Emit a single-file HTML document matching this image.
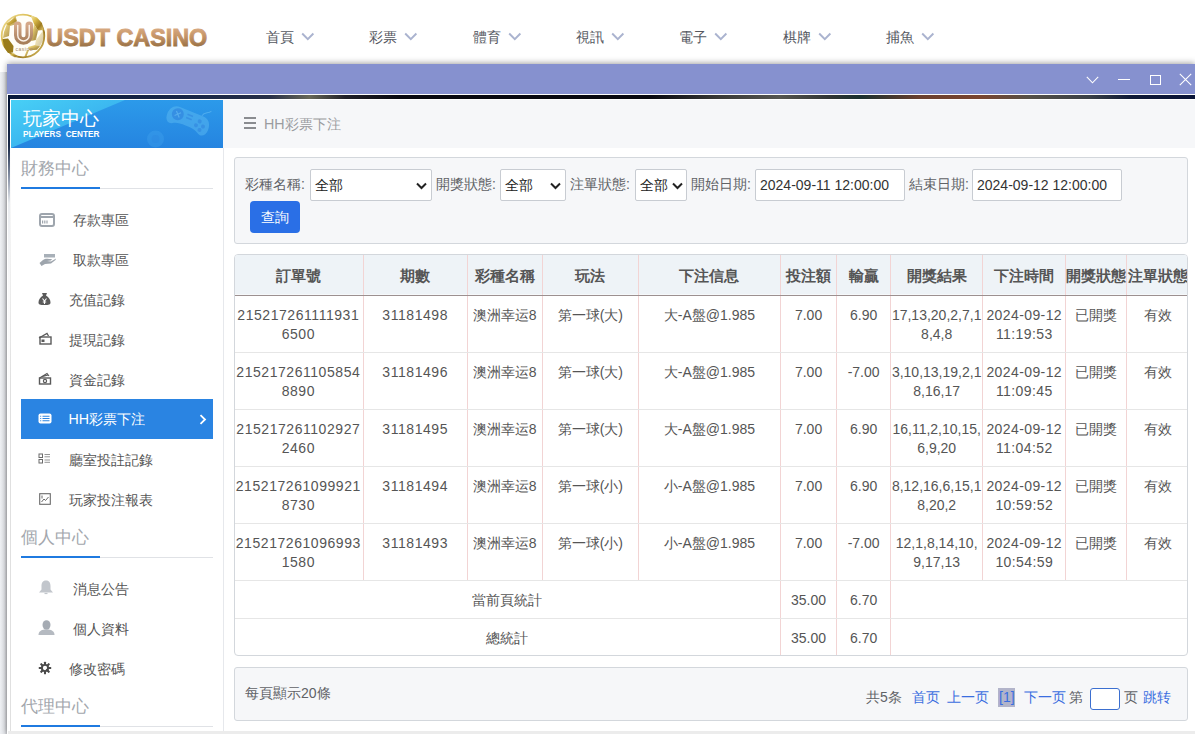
<!DOCTYPE html>
<html><head><meta charset="utf-8">
<style>
*{box-sizing:border-box;margin:0;padding:0}
html,body{width:1195px;height:734px;overflow:hidden;background:#fff;font-family:"Liberation Sans",sans-serif;color:#606266}
.abs{position:absolute}
#top{position:absolute;left:0;top:0;width:1195px;height:64px;background:#fff}
.nav{position:absolute;top:28px;font-size:14px;color:#55585f;line-height:18px;white-space:nowrap}
.nav svg{position:absolute;left:35px;top:4px}
#lshadow{position:absolute;left:0;top:72px;width:7px;height:662px;background:linear-gradient(to right,#eff1f4,#e2e4e8 60%,#c2c3c7)}
#tshadow{position:absolute;left:4px;top:58px;width:1191px;height:6px;background:linear-gradient(to bottom,rgba(0,0,0,0),rgba(0,0,0,.19))}
#bband{position:absolute;left:8px;top:731px;width:1187px;height:3px;background:#ececec}
#modal{position:absolute;left:7px;top:64px;width:1188px;height:670px;background:#fff;box-shadow:0 -1px 6px rgba(0,0,0,.36)}
#mbar{position:absolute;left:0;top:0;width:1188px;height:30px;background:#8691cf}
#mline{position:absolute;left:1px;top:31px;width:1187px;height:4px;background:linear-gradient(to right,#0a1a3c 0.0%,#1a2848 16.2%,#283048 22.1%,#686858 25.4%,#202028 28.4%,#080810 33.0%,#080810 54.1%,#3a3a38 60.0%,#555550 65.0%,#303434 69.3%,#1a3030 71.8%,#6a4030 76.8%,#7a4530 81.9%,#555048 86.1%,#3a4048 91.2%,#101a38 94.5%,#0a1438 100.0%)}
#sidebar{position:absolute;left:11px;top:100px;width:213px;height:631px;background:#fff;border-right:1px solid #e6e8ec}
#lborder{position:absolute;left:8px;top:95px;width:2px;height:636px;background:linear-gradient(to bottom,#001030 0%,#1a2a48 8%,#8a94a8 13%,rgba(220,224,230,.6) 17%,rgba(240,240,242,.4) 30%,rgba(255,255,255,0) 60%)}
#lborder2{position:absolute;left:10px;top:150px;width:1px;height:581px;background:linear-gradient(to bottom,rgba(220,222,226,0),#e0e0e0 40%)}
#shead{position:absolute;left:0;top:0;width:212px;height:48px;background:linear-gradient(to bottom,#2c9aea,#2584e0);overflow:hidden}
.sec{position:absolute;left:10px;font-size:17px;color:#a3a7ad;line-height:20px}
.secline{position:absolute;left:10px;width:192px;height:1px;background:#e0e2e6}
.secline b{position:absolute;left:0;top:-1px;width:79px;height:2px;background:#1f7ae0}
.item{position:absolute;font-size:14px;color:#555;line-height:18px;white-space:nowrap}
#content{position:absolute;left:224px;top:100px;width:971px;height:631px;background:#fff}
#crumb{position:absolute;left:-1px;top:0;width:972px;height:48px;background:#f6f7f9}
.panel{position:absolute;background:#f6f7f9;border:1px solid #d3d7dc;border-radius:3px}
.lbl{position:absolute;font-size:14px;color:#606266;line-height:18px;white-space:nowrap}
.sel{position:absolute;height:32px;background:#fff;border:1px solid #c8ccd2;border-radius:2px;font-size:14px;color:#222;line-height:30px;padding-left:4px}
table{border-collapse:collapse;font-size:14px;color:#555}
#tbl{position:absolute;left:-1px;top:-1px;table-layout:fixed;width:955px}
#tbl th{height:41px;background:#eef3f7;font-size:15px;font-weight:bold;color:#555;text-align:center;padding:4px 0 0 0;border-left:1px solid #f2d4d4;border-bottom:1px solid #9c9090;box-shadow:inset 0 -1px 0 #f6f9fb;white-space:nowrap;overflow:visible}
#tbl td{height:57px;text-align:center;vertical-align:top;padding:10px 0 0 0;line-height:19px;border-left:1px solid #f2d4d4;border-bottom:1px solid #e6e6e6;font-size:14px;color:#555}
#tbl tr.sum td{height:38px;vertical-align:middle;padding:2px 0 0 0}
#tbl th:first-child,#tbl td:first-child{border-left:none}
#tbl td.ls{letter-spacing:.55px}
#tbl td.ls4{letter-spacing:.4px}
</style></head><body>
<div id="top">
  <svg class="abs" style="left:0;top:10px" width="210" height="52" viewBox="0 0 210 52">
    <defs>
      <linearGradient id="gold" x1="0" y1="0" x2="1" y2="1"><stop offset="0" stop-color="#f4e6a8"/><stop offset=".35" stop-color="#d8b848"/><stop offset=".7" stop-color="#9c7a20"/><stop offset="1" stop-color="#e6cc70"/></linearGradient>
      <linearGradient id="ubrown" x1="0" y1="0" x2="0" y2="1"><stop offset="0" stop-color="#d4a888"/><stop offset="1" stop-color="#a8805c"/></linearGradient>
      <linearGradient id="tbrown" gradientUnits="userSpaceOnUse" x1="0" y1="18" x2="0" y2="36"><stop offset="0" stop-color="#d8aa82"/><stop offset=".5" stop-color="#c39264"/><stop offset="1" stop-color="#9c7448"/></linearGradient>
    </defs>
    <circle cx="23" cy="26" r="21.3" fill="#fffef8" stroke="url(#gold)" stroke-width="1.8"/>
    <g fill="url(#gold)">
      <path d="M31 5.5 L37 7.5 L42 13 L43.5 20 L38 20.5 L34 14 L32 9 Z"/>
      <path d="M2.5 29 L8 28.5 L13.5 36 L13 42.5 L8 43 L4 37 Z" fill="#9a7c1c"/>
      <path d="M6 14 L15 8 L16.5 11 L9 15.5 Z"/>
      <path d="M15.5 6 L17 11 L15 14.5 L10 16 L9 26 L3 28 L4 22 L7 14 Z" opacity=".75"/>
      <path d="M34 14 L38 20.5 L36 30 L31 31 Z" opacity=".8"/>
      <path d="M36 30 L43.5 20 L44 30 L40 36 L35 35 Z" opacity=".35"/>
      <path d="M13 42.5 L18 46.5 L15 47.5 L10 45 Z" opacity=".7"/>
      <path d="M28 37 L35 35 L40 36 L37 40 L29 40 Z" opacity=".8"/>
      <path d="M27 40 L29 40 L26 47.5 L24 47.5 Z" opacity=".8"/>
    </g>
    <path d="M17.75 15.35 V25.3 A5.75 5.75 0 0 0 29.25 25.3 V15.35" fill="none" stroke="url(#ubrown)" stroke-width="7.5" stroke-linecap="round"/>
    <path d="M17.75 15.35 V25.3 A5.75 5.75 0 0 0 29.25 25.3 V15.35" fill="none" stroke="#fbf3ea" stroke-width="1.4" stroke-linecap="round"/>
    <text x="15.5" y="40.5" font-family="Liberation Sans" font-size="5" textLength="17" fill="#a8886a">casino</text>
    <text x="46.3" y="35.8" font-family="Liberation Sans" font-weight="bold" font-size="24.5" textLength="161" lengthAdjust="spacingAndGlyphs" fill="url(#tbrown)" stroke="url(#tbrown)" stroke-width="0.9">USDT CASINO</text>
  </svg>
  <div class="nav" style="left:266px">首頁<svg width="14" height="9" viewBox="0 0 14 9"><path d="M1.2 1.5 L6.8 7.2 L12.4 1.5" fill="none" stroke="#aab3cf" stroke-width="1.9"/></svg></div>
  <div class="nav" style="left:369px">彩票<svg width="14" height="9" viewBox="0 0 14 9"><path d="M1.2 1.5 L6.8 7.2 L12.4 1.5" fill="none" stroke="#aab3cf" stroke-width="1.9"/></svg></div>
  <div class="nav" style="left:473px">體育<svg width="14" height="9" viewBox="0 0 14 9"><path d="M1.2 1.5 L6.8 7.2 L12.4 1.5" fill="none" stroke="#aab3cf" stroke-width="1.9"/></svg></div>
  <div class="nav" style="left:576px">視訊<svg width="14" height="9" viewBox="0 0 14 9"><path d="M1.2 1.5 L6.8 7.2 L12.4 1.5" fill="none" stroke="#aab3cf" stroke-width="1.9"/></svg></div>
  <div class="nav" style="left:679px">電子<svg width="14" height="9" viewBox="0 0 14 9"><path d="M1.2 1.5 L6.8 7.2 L12.4 1.5" fill="none" stroke="#aab3cf" stroke-width="1.9"/></svg></div>
  <div class="nav" style="left:783px">棋牌<svg width="14" height="9" viewBox="0 0 14 9"><path d="M1.2 1.5 L6.8 7.2 L12.4 1.5" fill="none" stroke="#aab3cf" stroke-width="1.9"/></svg></div>
  <div class="nav" style="left:886px">捕魚<svg width="14" height="9" viewBox="0 0 14 9"><path d="M1.2 1.5 L6.8 7.2 L12.4 1.5" fill="none" stroke="#aab3cf" stroke-width="1.9"/></svg></div>
</div>
<div id="lshadow"></div>
<div id="modal">
  <div id="mbar">
    <svg class="abs" style="left:1079px;top:12px" width="13" height="8" viewBox="0 0 13 8"><path d="M0.8 0.8 L6.5 6.8 L12.2 0.8" fill="none" stroke="#fff" stroke-width="1.1"/></svg>
    <div class="abs" style="left:1111px;top:15px;width:12px;height:1.3px;background:#fff"></div>
    <div class="abs" style="left:1143px;top:11px;width:11px;height:10px;border:1.6px solid #fff"></div>
    <svg class="abs" style="left:1172px;top:9px" width="13" height="13" viewBox="0 0 13 13"><path d="M0.8 0.8 L12.2 12.2 M12.2 0.8 L0.8 12.2" fill="none" stroke="#fff" stroke-width="1.1"/></svg>
  </div>
  <div id="mline"></div>
</div>
<div id="lborder"></div><div id="lborder2"></div>
<div id="sidebar">
  <div id="shead">
    <svg class="abs" style="left:0;top:0" width="212" height="48" viewBox="0 0 212 48">
      <defs><linearGradient id="hl" x1="0" y1="0" x2="1" y2="1"><stop offset="0" stop-color="#48d0f6"/><stop offset="1" stop-color="#309fea"/></linearGradient></defs>
      <polygon points="0,0 114,0 0,48" fill="url(#hl)"/>
      <g transform="translate(155 9) rotate(22 22 12)">
        <path d="M10 2 C3 2 0 7 0 13 C0 19 4 22 8 20 C11 18 14 17 22 17 C30 17 33 18 36 20 C40 22 44 19 44 13 C44 7 41 2 34 2 Z" fill="#5cbaf2" opacity=".5"/>
        <circle cx="10" cy="9.5" r="6" fill="#2a7cdc" opacity=".55"/>
        <path d="M7.5 7 L12.5 12 M12.5 7 L7.5 12" stroke="#70c4f6" stroke-width="1.2" opacity=".55"/>
        <g fill="#2a7cdc" opacity=".45"><circle cx="33" cy="8" r="2"/><circle cx="38" cy="11.5" r="2"/><circle cx="31" cy="13" r="2"/><circle cx="36" cy="16" r="2"/></g>
        <path d="M19 6 h6 M19 9.5 h6" stroke="#2a7cdc" stroke-width="1.5" opacity=".45"/>
        <path d="M33 2 C34 -3 38 -2 40 -6" fill="none" stroke="#70c4f6" stroke-width="1" opacity=".5"/>
      </g>
      <circle cx="144.5" cy="39" r="8.5" fill="#4aaef0" opacity=".28"/>
      <circle cx="144.5" cy="39" r="4" fill="#2a7cdc" opacity=".2"/>
    </svg>
    <div class="abs" style="left:11.5px;top:8px;font-size:19px;line-height:22px;color:#fff">玩家中心</div>
    <div class="abs" style="left:12px;top:30px;font-size:8.2px;font-weight:bold;line-height:9px;color:#fff;word-spacing:2.5px">PLAYERS CENTER</div>
  </div>
  <div class="sec" style="top:59px">財務中心</div>
  <div class="secline" style="top:88px"><b></b></div>
  <div class="item" style="left:62px;top:111px">存款專區</div>
  <div class="item" style="left:62px;top:151px">取款專區</div>
  <div class="item" style="left:58px;top:191px">充值記錄</div>
  <div class="item" style="left:58px;top:231px">提現記錄</div>
  <div class="item" style="left:58px;top:271px">資金記錄</div>
  <div class="abs" style="left:10px;top:299px;width:192px;height:40px;background:#2a84e2"></div>
  <div class="item" style="left:57.5px;top:310px;color:#fff;font-size:14.2px">HH彩票下注</div>
  <div class="item" style="left:58px;top:351px">廳室投註記錄</div>
  <div class="item" style="left:58px;top:391px">玩家投注報表</div>
  <svg class="abs" style="left:28px;top:113px" width="16" height="14" viewBox="0 0 16 14"><rect x="1" y="1" width="14" height="12" rx="2" fill="none" stroke="#9ea5ad" stroke-width="2"/><rect x="1" y="3" width="14" height="2" fill="#9ea5ad"/><path d="M3.6 7.6v2.8M5.8 7.6v2.8M8 7.6v2.8" stroke="#9ea5ad" stroke-width="1.2"/></svg>
  <svg class="abs" style="left:27px;top:153px" width="19" height="14" viewBox="0 0 19 14"><rect x="6" y="1" width="11" height="3.5" fill="#a8b0b8"/><path d="M1.5 10 L5 7 C7 5.5 9 5.5 11 6 L14 6 L13 7.5 L9 8 L13 8.5 L18 5.5 L17.5 7 L13 10.5 L7 11 L3.5 13 Z" fill="#9ea5ad"/></svg>
  <svg class="abs" style="left:27px;top:192px" width="13" height="14" viewBox="0 0 13 14"><path d="M4 1 L9 1 L8 3.5 C11 5 12.5 8 12.5 10.5 C12.5 12.5 11 13 6.5 13 C2 13 0.5 12.5 0.5 10.5 C0.5 8 2 5 5 3.5 Z" fill="#5a5a5a"/><path d="M4.5 6.5 L6.5 9 L8.5 6.5 M6.5 9 V12 M4.8 10 H8.2" stroke="#fff" stroke-width="1.1" fill="none"/></svg>
  <svg class="abs" style="left:27px;top:232px" width="14" height="13" viewBox="0 0 14 13"><path d="M1 6 L9 1.5 L10.5 4" fill="none" stroke="#5a5a5a" stroke-width="1.3"/><rect x="2" y="5" width="11" height="7" fill="none" stroke="#5a5a5a" stroke-width="1.4"/><rect x="3.5" y="7.5" width="3" height="2.5" fill="#5a5a5a"/></svg>
  <svg class="abs" style="left:27px;top:272px" width="14" height="13" viewBox="0 0 14 13"><path d="M1.5 6 L9 1.5 L11 4 M3 5 L10 3" fill="none" stroke="#5a5a5a" stroke-width="1.2"/><rect x="1.5" y="6" width="11" height="6" fill="none" stroke="#5a5a5a" stroke-width="1.4"/><circle cx="7" cy="9" r="1.6" fill="none" stroke="#5a5a5a" stroke-width="1.2"/></svg>
  <svg class="abs" style="left:27px;top:313px" width="14" height="11" viewBox="0 0 14 11"><rect x="0.5" y="0.5" width="13" height="10" rx="2" fill="#fff"/><path d="M4.5 3.2h7M4.5 5.5h7M4.5 7.8h7" stroke="#2a84e2" stroke-width="1.1"/><path d="M2.2 3.2h1M2.2 5.5h1M2.2 7.8h1" stroke="#2a84e2" stroke-width="1.1"/></svg>
  <svg class="abs" style="left:27px;top:353px" width="13" height="11" viewBox="0 0 13 11"><rect x="1" y="1" width="3.5" height="3.5" fill="none" stroke="#6a6a6a" stroke-width="1"/><rect x="1" y="6.5" width="3.5" height="3.5" fill="none" stroke="#6a6a6a" stroke-width="1"/><path d="M6.5 1.5h5.5M6.5 3.8h5.5M6.5 7h5.5M6.5 9.3h5.5" stroke="#8a8a8a" stroke-width="0.9"/></svg>
  <svg class="abs" style="left:28px;top:393px" width="12" height="12" viewBox="0 0 12 12"><rect x="0.7" y="0.7" width="10.6" height="10.6" fill="none" stroke="#6a6a6a" stroke-width="1.1"/><path d="M2.5 9 L5 6 L6.5 7.5 L9.5 4 M3 2.5v3" fill="none" stroke="#6a6a6a" stroke-width="1"/></svg>
  <svg class="abs" style="left:27px;top:480px" width="16" height="15" viewBox="0 0 16 15"><path d="M8 0.5 C4.5 0.5 3.5 3 3.5 6 L3.5 9.5 L1 12.5 L15 12.5 L12.5 9.5 L12.5 6 C12.5 3 11.5 0.5 8 0.5 Z" fill="#c2c6cc"/><path d="M6.5 13.5 h3" stroke="#c2c6cc" stroke-width="1.2"/></svg>
  <svg class="abs" style="left:27px;top:520px" width="17" height="15" viewBox="0 0 17 15"><ellipse cx="8.5" cy="5" rx="4" ry="4.8" fill="#a5abb3"/><path d="M0.5 15 C0.5 11.5 3 10 6.5 9.5 L10.5 9.5 C14 10 16.5 11.5 16.5 15 Z" fill="#b5bac1"/></svg>
  <svg class="abs" style="left:27px;top:561px" width="14" height="14" viewBox="0 0 14 14"><g transform="translate(7 7) scale(.93) translate(-7 -7)"><g fill="#4a4a4a"><circle cx="7" cy="7" r="4.4"/><rect x="5.9" y="0.3" width="2.2" height="13.4" rx=".6"/><rect x="5.9" y="0.3" width="2.2" height="13.4" rx=".6" transform="rotate(45 7 7)"/><rect x="5.9" y="0.3" width="2.2" height="13.4" rx=".6" transform="rotate(90 7 7)"/><rect x="5.9" y="0.3" width="2.2" height="13.4" rx=".6" transform="rotate(135 7 7)"/></g><circle cx="7" cy="7" r="2.3" fill="#fff"/><path d="M8.3 8.3 L10.3 10.3" stroke="#4a4a4a" stroke-width="1.4"/></g></svg>
  <svg class="abs" style="left:188px;top:314px" width="8" height="11" viewBox="0 0 8 11"><path d="M1.5 1.2 L6 5.5 L1.5 9.8" fill="none" stroke="#fff" stroke-width="1.8"/></svg>
  <div class="sec" style="top:428px">個人中心</div>
  <div class="secline" style="top:457px"><b></b></div>
  <div class="item" style="left:62px;top:480px">消息公告</div>
  <div class="item" style="left:62px;top:520px">個人資料</div>
  <div class="item" style="left:58px;top:560px">修改密碼</div>
  <div class="sec" style="top:597px">代理中心</div>
  <div class="secline" style="top:626px"><b></b></div>
</div>
<div id="content">
  <div id="crumb">
    <svg class="abs" style="left:21px;top:17px" width="12" height="12" viewBox="0 0 12 12"><path d="M0 1h12M0 6h12M0 11h12" stroke="#8a8c90" stroke-width="2"/></svg>
    <div class="abs" style="left:41px;top:15px;font-size:14.3px;line-height:18px;color:#9a9ca0">HH彩票下注</div>
  </div>
  <div class="panel" style="left:10px;top:57px;width:954px;height:87px">
    <div class="lbl" style="left:10px;top:17px">彩種名稱:</div>
    <div class="sel" style="left:75px;top:11px;width:122px">全部<svg class="abs" style="right:4px;top:12px" width="11" height="8" viewBox="0 0 11 8"><path d="M1 1.5 L5.5 6 L10 1.5" fill="none" stroke="#222" stroke-width="2"/></svg></div>
    <div class="lbl" style="left:201px;top:17px">開獎狀態:</div>
    <div class="sel" style="left:265px;top:11px;width:66px">全部<svg class="abs" style="right:4px;top:12px" width="11" height="8" viewBox="0 0 11 8"><path d="M1 1.5 L5.5 6 L10 1.5" fill="none" stroke="#222" stroke-width="2"/></svg></div>
    <div class="lbl" style="left:335px;top:17px">注單狀態:</div>
    <div class="sel" style="left:400px;top:11px;width:52px">全部<svg class="abs" style="right:3px;top:12px" width="11" height="8" viewBox="0 0 11 8"><path d="M1 1.5 L5.5 6 L10 1.5" fill="none" stroke="#222" stroke-width="2"/></svg></div>
    <div class="lbl" style="left:456px;top:17px">開始日期:</div>
    <div class="sel" style="left:520px;top:11px;width:150px;padding-left:4px;color:#333">2024-09-11 12:00:00</div>
    <div class="lbl" style="left:674px;top:17px">結束日期:</div>
    <div class="sel" style="left:737px;top:11px;width:150px;padding-left:4px;color:#333">2024-09-12 12:00:00</div>
    <div class="abs" style="left:15px;top:43px;width:50px;height:32px;background:#2a6fe6;border-radius:4px;color:#fff;font-size:14px;line-height:32px;text-align:center">查詢</div>
  </div>
  <div class="abs" style="left:10px;top:154px;width:954px;height:402px;border:1px solid #d3d7dc;border-radius:4px;overflow:hidden;background:#fff">
  <table id="tbl">
    <colgroup><col style="width:129px"><col style="width:104px"><col style="width:75px"><col style="width:96px"><col style="width:142px"><col style="width:56px"><col style="width:54px"><col style="width:92px"><col style="width:83px"><col style="width:61px"><col style="width:62px"></colgroup>
    <thead><tr><th>訂單號</th><th>期數</th><th>彩種名稱</th><th>玩法</th><th>下注信息</th><th>投注額</th><th>輸贏</th><th>開獎結果</th><th>下注時間</th><th>開獎狀態</th><th>注單狀態</th></tr></thead>
    <tbody>
    <tr><td class="ls">215217261111931<br>6500</td><td class="ls">31181498</td><td>澳洲幸运8</td><td>第一球(大)</td><td>大-A盤@1.985</td><td>7.00</td><td>6.90</td><td>17,13,20,2,7,1<br>8,4,8</td><td class="ls4">2024-09-12<br>11:19:53</td><td>已開獎</td><td>有效</td></tr>
    <tr><td class="ls">215217261105854<br>8890</td><td class="ls">31181496</td><td>澳洲幸运8</td><td>第一球(大)</td><td>大-A盤@1.985</td><td>7.00</td><td>-7.00</td><td>3,10,13,19,2,1<br>8,16,17</td><td class="ls4">2024-09-12<br>11:09:45</td><td>已開獎</td><td>有效</td></tr>
    <tr><td class="ls">215217261102927<br>2460</td><td class="ls">31181495</td><td>澳洲幸运8</td><td>第一球(大)</td><td>大-A盤@1.985</td><td>7.00</td><td>6.90</td><td>16,11,2,10,15,<br>6,9,20</td><td class="ls4">2024-09-12<br>11:04:52</td><td>已開獎</td><td>有效</td></tr>
    <tr><td class="ls">215217261099921<br>8730</td><td class="ls">31181494</td><td>澳洲幸运8</td><td>第一球(小)</td><td>小-A盤@1.985</td><td>7.00</td><td>6.90</td><td>8,12,16,6,15,1<br>8,20,2</td><td class="ls4">2024-09-12<br>10:59:52</td><td>已開獎</td><td>有效</td></tr>
    <tr><td class="ls">215217261096993<br>1580</td><td class="ls">31181493</td><td>澳洲幸运8</td><td>第一球(小)</td><td>小-A盤@1.985</td><td>7.00</td><td>-7.00</td><td>12,1,8,14,10,<br>9,17,13</td><td class="ls4">2024-09-12<br>10:54:59</td><td>已開獎</td><td>有效</td></tr>
    <tr class="sum"><td colspan="5">當前頁統計</td><td>35.00</td><td>6.70</td><td colspan="4"></td></tr>
    <tr class="sum"><td colspan="5">總統計</td><td>35.00</td><td>6.70</td><td colspan="4"></td></tr>
    </tbody>
  </table>
  </div>
  <div class="panel" style="left:10px;top:567px;width:954px;height:54px">
    <div class="lbl" style="left:10px;top:16px">每頁顯示20條</div>
    <div class="lbl" style="left:631px;top:20px">共5条</div>
    <div class="lbl" style="left:677px;top:20px;color:#3a6ee0">首页</div>
    <div class="lbl" style="left:712px;top:20px;color:#3a6ee0">上一页</div>
    <div class="abs" style="left:763px;top:20px;width:17px;height:19px;background:#b2b4ca"></div>
    <div class="lbl" style="left:764px;top:20px;color:#3a6ee0">[1]</div>
    <div class="lbl" style="left:789px;top:20px;color:#3a6ee0">下一页</div>
    <div class="lbl" style="left:834px;top:20px">第</div>
    <div class="abs" style="left:855px;top:20px;width:30px;height:22px;background:#fff;border:1px solid #3b6fd0;border-radius:3px"></div>
    <div class="lbl" style="left:889px;top:20px">页</div>
    <div class="lbl" style="left:908px;top:20px;color:#3a6ee0">跳转</div>
  </div>
</div>
<div id="bband"></div>
</body></html>
